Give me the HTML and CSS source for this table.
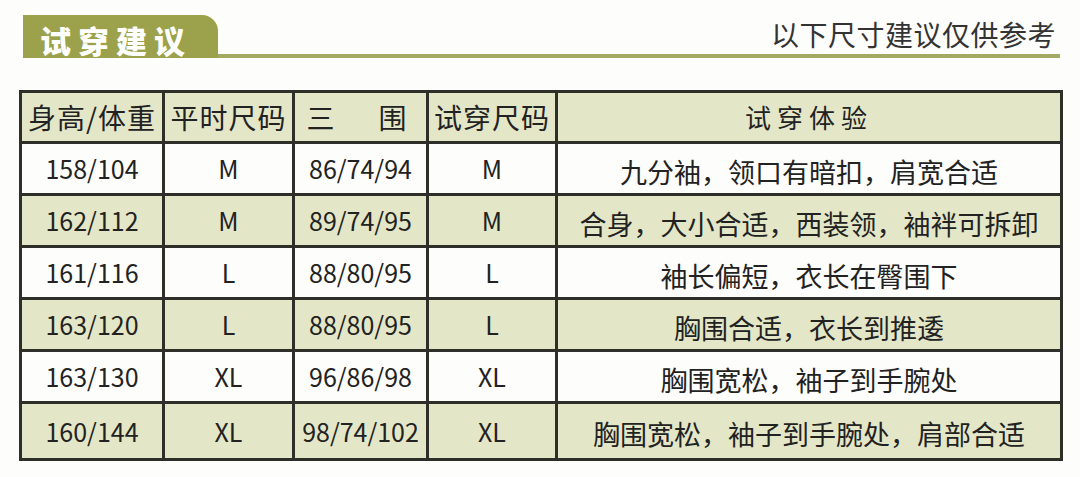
FILE: index.html
```html
<!DOCTYPE html>
<html lang="zh">
<head>
<meta charset="utf-8">
<link rel="stylesheet" href="styles.css">
</head>
<body>
<div class="page">
  <div class="titlebar">
    <div class="tab">试穿建议</div>
    <div class="line"><span class="note">以下尺寸建议仅供参考</span></div>
  </div>
  <table class="size">
    <colgroup>
      <col class="c1"><col class="c2"><col class="c3"><col class="c4"><col class="c5">
    </colgroup>
    <thead>
      <tr class="head"><th>身高/体重</th><th>平时尺码</th><th class="sw">三　围</th><th>试穿尺码</th><th class="exp">试穿体验</th></tr>
    </thead>
    <tbody>
      <tr><td>158/104</td><td>M</td><td>86/74/94</td><td>M</td><td class="cn">九分袖，领口有暗扣，肩宽合适</td></tr>
      <tr class="alt"><td>162/112</td><td>M</td><td>89/74/95</td><td>M</td><td class="cn">合身，大小合适，西装领，袖袢可拆卸</td></tr>
      <tr><td>161/116</td><td>L</td><td>88/80/95</td><td>L</td><td class="cn">袖长偏短，衣长在臀围下</td></tr>
      <tr class="alt"><td>163/120</td><td>L</td><td>88/80/95</td><td>L</td><td class="cn">胸围合适，衣长到推逶</td></tr>
      <tr><td>163/130</td><td>XL</td><td>96/86/98</td><td>XL</td><td class="cn">胸围宽松，袖子到手腕处</td></tr>
      <tr class="alt last"><td>160/144</td><td>XL</td><td>98/74/102</td><td>XL</td><td class="cn">胸围宽松，袖子到手腕处，肩部合适</td></tr>
    </tbody>
  </table>
</div>
</body>
</html>
```
FILE: styles.css
```css
html, body {
  margin: 0;
  padding: 0;
  background: #fdfdfb;
}
.page {
  width: 1080px;
  height: 477px;
  padding-top: 15px;
  box-sizing: border-box;
  font-family: "Noto Sans CJK SC", "Noto Sans", sans-serif;
  color: #222;
}
.titlebar {
  display: flex;
  align-items: flex-end;
  margin-left: 23px;
  width: 1037px;
  height: 43px;
}
.tab {
  width: 195px;
  height: 43px;
  background: #9ba24b;
  border-top-right-radius: 16px;
  color: #fff;
  font-weight: 900;
  font-size: 31px;
  line-height: 31px;
  padding: 9px 0 0 17px;
  letter-spacing: 7px;
  box-sizing: border-box;
  white-space: nowrap;
}
.line {
  flex: 1;
  height: 43px;
  border-bottom: 4px solid #a3a962;
  box-sizing: border-box;
  display: flex;
  justify-content: flex-end;
  align-items: center;
}
.note {
  font-size: 28px;
  line-height: 1;
  font-weight: 400;
  color: #333;
  letter-spacing: 0.5px;
  margin-right: 4px;
  margin-top: -2px;
}
.size {
  margin: 32px 0 0 19px;
  width: 1041px;
  border-collapse: collapse;
  table-layout: fixed;
}
.c1 { width: 143px; }
.c2 { width: 130px; }
.c3 { width: 134px; }
.c4 { width: 129px; }
.c5 { width: 505px; }
.size tr { height: 52px; }
.size tr.head { height: 51px; }
.size tr.last { height: 57px; }
.size th, .size td {
  border: 3px solid #2f2f2a;
  text-align: center;
  padding: 0;
  line-height: 1;
  white-space: nowrap;
  overflow: hidden;
}
.size th {
  background: #e4e6c8;
  font-weight: 400;
  font-size: 28px;
  letter-spacing: 1px;
  color: #222;
}
.size th.sw { letter-spacing: 8px; }
.size th.exp { font-size: 26px; letter-spacing: 6px; }
.size td {
  font-size: 25px;
  color: #222;
}
.size td.cn {
  font-size: 27px;
  padding-top: 5px;
}
.size tr.alt td {
  background: #e4e7c7;
}
```
